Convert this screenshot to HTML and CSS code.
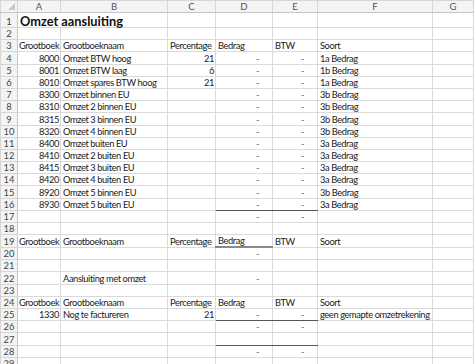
FILE: index.html
```html
<!DOCTYPE html>
<html lang="nl">
<head>
  <meta charset="UTF-8" />
  <title>Omzet aansluiting</title>
  <link rel="stylesheet" href="styles.css">
</head>
<body>
  <table class="sheet">
    <colgroup>
      <col class="c-head">
      <col class="c-a">
      <col class="c-b">
      <col class="c-c">
      <col class="c-d">
      <col class="c-e">
      <col class="c-f">
      <col class="c-g">
    </colgroup>
    <thead>
      <tr class="letters">
        <th class="corner"><span class="tri"></span></th>
        <th>A</th><th>B</th><th>C</th><th>D</th><th>E</th><th>F</th><th>G</th>
      </tr>
    </thead>
    <tbody>
      <tr class="title-row"><th>1</th><td colspan="2" class="title">Omzet aansluiting</td><td></td><td></td><td></td><td></td><td></td></tr>
      <tr><th>2</th><td></td><td></td><td></td><td></td><td></td><td></td><td></td></tr>
      <tr><th>3</th><td class="tight">Grootboek</td><td>Grootboeknaam</td><td>Percentage</td><td>Bedrag</td><td>BTW</td><td>Soort</td><td></td></tr>
      <tr><th>4</th><td class="num">8000</td><td>Omzet BTW hoog</td><td class="num">21</td><td class="acc">-</td><td class="acc">-</td><td>1a Bedrag</td><td></td></tr>
      <tr><th>5</th><td class="num">8001</td><td>Omzet BTW laag</td><td class="num">6</td><td class="acc">-</td><td class="acc">-</td><td>1b Bedrag</td><td></td></tr>
      <tr><th>6</th><td class="num">8010</td><td>Omzet spares BTW hoog</td><td class="num">21</td><td class="acc">-</td><td class="acc">-</td><td>1a Bedrag</td><td></td></tr>
      <tr><th>7</th><td class="num">8300</td><td>Omzet binnen EU</td><td></td><td class="acc">-</td><td class="acc">-</td><td>3b Bedrag</td><td></td></tr>
      <tr><th>8</th><td class="num">8310</td><td>Omzet 2 binnen EU</td><td></td><td class="acc">-</td><td class="acc">-</td><td>3b Bedrag</td><td></td></tr>
      <tr><th>9</th><td class="num">8315</td><td>Omzet 3 binnen EU</td><td></td><td class="acc">-</td><td class="acc">-</td><td>3b Bedrag</td><td></td></tr>
      <tr><th>10</th><td class="num">8320</td><td>Omzet 4 binnen EU</td><td></td><td class="acc">-</td><td class="acc">-</td><td>3b Bedrag</td><td></td></tr>
      <tr><th>11</th><td class="num">8400</td><td>Omzet buiten EU</td><td></td><td class="acc">-</td><td class="acc">-</td><td>3a Bedrag</td><td></td></tr>
      <tr><th>12</th><td class="num">8410</td><td>Omzet 2 buiten EU</td><td></td><td class="acc">-</td><td class="acc">-</td><td>3a Bedrag</td><td></td></tr>
      <tr><th>13</th><td class="num">8415</td><td>Omzet 3 buiten EU</td><td></td><td class="acc">-</td><td class="acc">-</td><td>3a Bedrag</td><td></td></tr>
      <tr><th>14</th><td class="num">8420</td><td>Omzet 4 buiten EU</td><td></td><td class="acc">-</td><td class="acc">-</td><td>3a Bedrag</td><td></td></tr>
      <tr><th>15</th><td class="num">8920</td><td>Omzet 5 binnen EU</td><td></td><td class="acc">-</td><td class="acc">-</td><td>3b Bedrag</td><td></td></tr>
      <tr><th>16</th><td class="num">8930</td><td>Omzet 5 buiten EU</td><td></td><td class="acc ul">-</td><td class="acc ul">-</td><td>3a Bedrag</td><td></td></tr>
      <tr><th>17</th><td></td><td></td><td></td><td class="acc">-</td><td class="acc">-</td><td></td><td></td></tr>
      <tr><th>18</th><td></td><td></td><td></td><td></td><td></td><td></td><td></td></tr>
      <tr><th>19</th><td class="tight">Grootboek</td><td>Grootboeknaam</td><td>Percentage</td><td class="ul-thick">Bedrag</td><td>BTW</td><td>Soort</td><td></td></tr>
      <tr><th>20</th><td></td><td></td><td></td><td class="acc">-</td><td></td><td></td><td></td></tr>
      <tr><th>21</th><td></td><td></td><td></td><td></td><td></td><td></td><td></td></tr>
      <tr><th>22</th><td></td><td>Aansluiting met omzet</td><td></td><td class="acc">-</td><td></td><td></td><td></td></tr>
      <tr><th>23</th><td></td><td></td><td></td><td></td><td></td><td></td><td></td></tr>
      <tr><th>24</th><td class="tight">Grootboek</td><td>Grootboeknaam</td><td>Percentage</td><td>Bedrag</td><td>BTW</td><td>Soort</td><td></td></tr>
      <tr><th>25</th><td class="num">1330</td><td>Nog te factureren</td><td class="num">21</td><td class="acc ul">-</td><td class="acc ul">-</td><td>geen gemapte omzetrekening</td><td></td></tr>
      <tr><th>26</th><td></td><td></td><td></td><td class="acc">-</td><td class="acc">-</td><td></td><td></td></tr>
      <tr><th>27</th><td></td><td></td><td></td><td class="ul"></td><td class="ul"></td><td></td><td></td></tr>
      <tr><th>28</th><td></td><td></td><td></td><td class="acc">-</td><td class="acc">-</td><td></td><td></td></tr>
      <tr><th>29</th><td></td><td></td><td></td><td></td><td></td><td></td><td></td></tr>
    </tbody>
  </table>
</body>
</html>
```

FILE: styles.css
```css
* { box-sizing: border-box; }

body {
  margin: 0;
  background: #fff;
  overflow: hidden;
  font-family: Lato, "Liberation Sans", sans-serif;
  color: #1a1a1a;
}

.sheet {
  border-collapse: collapse;
  table-layout: fixed;
  width: 473px;
  font-size: 9.3px;
  letter-spacing: -0.4px;
}

.c-head { width: 17px; }
.c-a { width: 43px; }
.c-b { width: 107px; }
.c-c { width: 48px; }
.c-d { width: 57px; }
.c-e { width: 45px; }
.c-f { width: 115px; }
.c-g { width: 41px; }

.sheet td,
.sheet th {
  border: 1px solid #dadada;
  padding: 0 2px;
  height: 12.19px;
  line-height: 11px;
  vertical-align: bottom;
  white-space: nowrap;
  overflow: visible;
  text-align: left;
}

.sheet thead th {
  height: 12px;
  background: #f4f4f4;
  color: #555;
  font-size: 9.6px;
  letter-spacing: 0;
  font-weight: normal;
  text-align: center;
  vertical-align: middle;
  border-color: #d6d6d6;
  border-bottom-color: #c6c6c6;
}

.sheet tbody th {
  background: #f4f4f4;
  color: #444;
  font-size: 9.4px;
  letter-spacing: 0;
  font-weight: normal;
  text-align: center;
  padding: 0;
  border-color: #d6d6d6;
  border-right-color: #c6c6c6;
}

.corner {
  position: relative;
}

.tri {
  position: absolute;
  right: 2px;
  bottom: 2px;
  width: 0;
  height: 0;
  border-left: 7px solid transparent;
  border-bottom: 7px solid #c8c8c8;
}

.sheet .title-row td,
.sheet .title-row th {
  height: 15px;
}

.title {
  font-size: 12.8px;
  font-weight: bold;
  letter-spacing: 0;
  color: #111;
}

.sheet td.tight {
  padding-left: 1px;
}

.num {
  text-align: right !important;
  padding-right: 1px !important;
}

.acc {
  text-align: right !important;
  padding-right: 13px !important;
  color: #666;
}

.sheet td.ul {
  border-bottom: 1px solid #555;
}

.sheet td.ul-thick {
  border-bottom: 2px solid #8a8a8a;
}
```
